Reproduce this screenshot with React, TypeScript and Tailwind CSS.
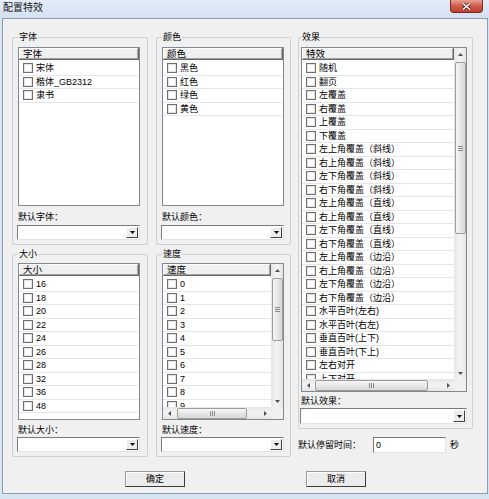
import React from 'react';

const fonts = ['宋体', '楷体_GB2312', '隶书'];
const colors = ['黑色', '红色', '绿色', '黄色'];
const sizes = ['16', '18', '20', '22', '24', '26', '28', '32', '36', '48'];
const speeds = ['0', '1', '2', '3', '4', '5', '6', '7', '8', '9'];
const effects = [
  '随机',
  '翻页',
  '左覆盖',
  '右覆盖',
  '上覆盖',
  '下覆盖',
  '左上角覆盖（斜线）',
  '右上角覆盖（斜线）',
  '左下角覆盖（斜线）',
  '右下角覆盖（斜线）',
  '左上角覆盖（直线）',
  '右上角覆盖（直线）',
  '左下角覆盖（直线）',
  '右下角覆盖（直线）',
  '左上角覆盖（边沿）',
  '右上角覆盖（边沿）',
  '左下角覆盖（边沿）',
  '右下角覆盖（边沿）',
  '水平百叶(左右)',
  '水平百叶(右左)',
  '垂直百叶(上下)',
  '垂直百叶(下上)',
  '左右对开',
  '上下对开',
];

export default function App() {
  return (
    <div className="w-[489px] h-[499px] bg-[#d7e4f2] flex flex-col font-['Liberation_Sans','Noto_Sans_CJK_SC',sans-serif] text-[9px] text-black overflow-hidden">
      {/* title bar */}
      <div className="relative h-[18px] shrink-0 bg-gradient-to-b from-[#e4edf8] to-[#d3e1f1]">
        <span className="absolute left-[3px] top-[2px] text-[10px] leading-[12px] text-[#1a1a1a]">配置特效</span>
        <div className="absolute right-[6px] top-0 w-[33px] h-[13px] rounded-b-[4px] border border-t-0 border-[#7a2a22] bg-gradient-to-b from-[#e6a394] via-[#cf5a4c] to-[#c23f30] flex items-center justify-center">
          <svg width="9" height="7" viewBox="0 0 9 7">
            <path d="M1 0.5 L8 6.5 M8 0.5 L1 6.5" stroke="#5a1a14" strokeWidth="3" />
            <path d="M1 0.5 L8 6.5 M8 0.5 L1 6.5" stroke="#ffffff" strokeWidth="1.6" />
          </svg>
        </div>
      </div>

      {/* client */}
      <div className="ml-[2px] w-[486px] h-[476px] border border-[#8d9db0] bg-[#f0f0f0] flex flex-col">
        <div className="flex pl-[9px] pt-[11px]">
          {/* left column */}
          <div className="w-[136px] flex flex-col">
            <GroupBox title="字体" className="pl-[5px] pr-[7px]">
              <ListView title="字体" items={fonts} className="mt-[3px] h-[159px]" />
              <Label className="mt-[5px]">默认字体：</Label>
              <Combo className="mt-[2px] h-[15px] -ml-[1px]" />
            </GroupBox>
            <GroupBox title="大小" className="mt-[2px] pl-[5px] pr-[7px]">
              <ListView title="大小" items={sizes} className="mt-[2px] h-[157px]" />
              <Label className="mt-[4px]">默认大小：</Label>
              <Combo className="mt-[1px] h-[15px] -ml-[1px]" />
            </GroupBox>
          </div>

          {/* middle column */}
          <div className="w-[135px] ml-[8px] flex flex-col">
            <GroupBox title="颜色" className="pl-[5px] pr-[6px]">
              <ListView title="颜色" items={colors} className="mt-[3px] h-[159px]" />
              <Label className="mt-[5px]">默认颜色：</Label>
              <Combo className="mt-[2px] h-[15px] -ml-[1px]" />
            </GroupBox>
            <GroupBox title="速度" className="mt-[2px] pl-[5px] pr-[6px]">
              <ListView
                title="速度"
                items={speeds}
                className="mt-[2px] h-[157px]"
                vscroll={<VScroll thumb="mt-[2px] h-[63px]" />}
                hscroll={<HScroll thumb="ml-[2px] w-[70px]" />}
              />
              <Label className="mt-[4px]">默认速度：</Label>
              <Combo className="mt-[1px] h-[15px] -ml-[1px]" />
            </GroupBox>
          </div>

          {/* right column */}
          <div className="w-[173px] ml-[7px] flex flex-col">
            <GroupBox title="效果" className="pl-[2px] pr-[5px]">
              <ListView
                title="特效"
                items={effects}
                className="mt-[3px] h-[345px]"
                vscroll={<VScroll thumb="mt-[2px] h-[172px]" />}
                hscroll={<HScroll thumb="ml-[1px] w-[113px]" />}
              />
              <Label className="mt-[3px]">默认效果：</Label>
              <Combo className="mt-[1px] h-[16px] -ml-[1px] w-[167px]" />
            </GroupBox>
            <div className="mt-[8px] h-[16px] flex items-center">
              <span className="leading-[12px] whitespace-nowrap">默认停留时间：</span>
              <div className="ml-[12px] w-[73px] h-[16px] border border-[#7a7a7a] border-r-[#e3e3e3] border-b-[#e3e3e3] bg-white flex items-center pl-[2px]">
                <span className="leading-[12px]">0</span>
              </div>
              <span className="ml-[4px] leading-[12px]">秒</span>
            </div>
          </div>
        </div>

        {/* buttons */}
        <div className="flex mt-[14px] pl-[122px]">
          <Button>确定</Button>
          <Button className="ml-[121px]">取消</Button>
        </div>
      </div>
    </div>
  );
}

function GroupBox({
  title,
  className,
  children,
}: {
  title: string;
  className?: string;
  children: React.ReactNode;
}) {
  return (
    <fieldset className={`border border-[#cbd1d6] rounded-[2px] pb-[4px] ${className ?? ''}`}>
      <legend className="px-[1px] leading-[14px] text-[9px]">{title}</legend>
      <div className="flex flex-col">{children}</div>
    </fieldset>
  );
}

function Label({ children, className }: { children: React.ReactNode; className?: string }) {
  return <div className={`h-[12px] leading-[12px] whitespace-nowrap ${className ?? ''}`}>{children}</div>;
}

function Combo({ className }: { className?: string }) {
  return (
    <div
      className={`border border-[#7a7a7a] border-r-[#e3e3e3] border-b-[#e3e3e3] bg-white flex justify-end p-[1px] ${className ?? ''}`}
    >
      <div className="w-[12px] bg-[#ececec] border border-white border-r-[#404040] border-b-[#404040] flex items-center justify-center">
        <svg width="5" height="3" viewBox="0 0 5 3">
          <polygon points="0,0 5,0 2.5,3" fill="#000" />
        </svg>
      </div>
    </div>
  );
}

function Button({ children, className }: { children: React.ReactNode; className?: string }) {
  return (
    <div
      className={`w-[60px] h-[16px] border border-[#9a9a9a] border-r-[#3c3c3c] border-b-[#3c3c3c] bg-[#ececec] shadow-[inset_1px_1px_0_#ffffff] flex items-center justify-center leading-[12px] ${className ?? ''}`}
    >
      {children}
    </div>
  );
}

function Check() {
  return <span className="w-[10px] h-[10px] shrink-0 border border-[#6f6f6f] bg-white shadow-[inset_0_0_0_1px_#e4e4e4]" />;
}

function ListView({
  title,
  items,
  className,
  vscroll,
  hscroll,
}: {
  title: string;
  items: string[];
  className?: string;
  vscroll?: React.ReactNode;
  hscroll?: React.ReactNode;
}) {
  return (
    <div className={`border border-[#828790] bg-white flex flex-col overflow-hidden ${className ?? ''}`}>
      <div className="flex flex-1 min-h-0">
        <div className="flex-1 min-w-0 flex flex-col overflow-hidden">
          <div className="h-[12px] shrink-0 bg-[#efefef] border-b border-r border-[#696969] shadow-[inset_1px_1px_0_#ffffff,inset_-1px_-1px_0_#a0a0a0] pl-[4px] leading-[11px] text-[9.5px]">
            {title}
          </div>
          <div className="pt-[2px] flex-1 min-h-0 overflow-hidden">
            {items.map((item) => (
              <div
                key={item}
                className="h-[13.5px] flex items-center gap-[3px] pl-[4px] border-b border-[#e6e6e6] whitespace-nowrap"
              >
                <Check />
                <span className="leading-[12px]">{item}</span>
              </div>
            ))}
          </div>
        </div>
        {vscroll}
      </div>
      {hscroll && (
        <div className="flex h-[12px] shrink-0">
          <div className="flex-1 min-w-0">{hscroll}</div>
          {vscroll && <div className="w-[12px] bg-[#f0f0f0]" />}
        </div>
      )}
    </div>
  );
}

function Arrow({ dir }: { dir: 'up' | 'down' | 'left' | 'right' }) {
  if (dir === 'up')
    return (
      <svg width="5" height="3" viewBox="0 0 5 3">
        <polygon points="0,3 2.5,0 5,3" fill="#505050" />
      </svg>
    );
  if (dir === 'down')
    return (
      <svg width="5" height="3" viewBox="0 0 5 3">
        <polygon points="0,0 5,0 2.5,3" fill="#505050" />
      </svg>
    );
  if (dir === 'left')
    return (
      <svg width="3" height="5" viewBox="0 0 3 5">
        <polygon points="3,0 3,5 0,2.5" fill="#505050" />
      </svg>
    );
  return (
    <svg width="3" height="5" viewBox="0 0 3 5">
      <polygon points="0,0 0,5 3,2.5" fill="#505050" />
    </svg>
  );
}

function VScroll({ thumb }: { thumb: string }) {
  return (
    <div className="w-[12px] shrink-0 flex flex-col bg-gradient-to-r from-[#e6e6e6] via-[#f3f3f3] to-[#e6e6e6]">
      <div className="h-[12px] shrink-0 flex items-center justify-center">
        <Arrow dir="up" />
      </div>
      <div className="flex-1 min-h-0 flex flex-col items-center">
        <div
          className={`w-[11px] rounded-[2px] border border-[#9c9c9c] bg-gradient-to-r from-[#f6f6f6] to-[#d8d8d8] flex flex-col items-center justify-center gap-[1px] ${thumb}`}
        >
          <span className="w-[5px] h-[1px] bg-[#8a8a8a]" />
          <span className="w-[5px] h-[1px] bg-[#8a8a8a]" />
          <span className="w-[5px] h-[1px] bg-[#8a8a8a]" />
        </div>
      </div>
      <div className="h-[12px] shrink-0 flex items-center justify-center">
        <Arrow dir="down" />
      </div>
    </div>
  );
}

function HScroll({ thumb }: { thumb: string }) {
  return (
    <div className="h-[12px] flex bg-gradient-to-b from-[#e6e6e6] via-[#f3f3f3] to-[#e6e6e6]">
      <div className="w-[12px] shrink-0 flex items-center justify-center">
        <Arrow dir="left" />
      </div>
      <div className="flex-1 min-w-0 flex items-center">
        <div
          className={`h-[11px] rounded-[2px] border border-[#9c9c9c] bg-gradient-to-b from-[#f6f6f6] to-[#d8d8d8] flex items-center justify-center gap-[1px] ${thumb}`}
        >
          <span className="w-[1px] h-[5px] bg-[#8a8a8a]" />
          <span className="w-[1px] h-[5px] bg-[#8a8a8a]" />
          <span className="w-[1px] h-[5px] bg-[#8a8a8a]" />
        </div>
      </div>
      <div className="w-[12px] shrink-0 flex items-center justify-center">
        <Arrow dir="right" />
      </div>
    </div>
  );
}
